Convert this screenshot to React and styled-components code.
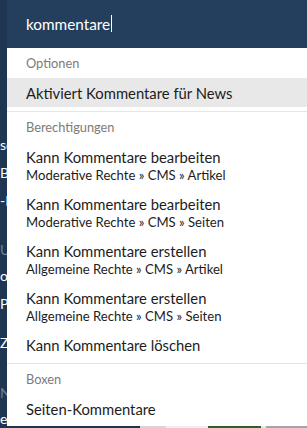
import { createGlobalStyle, styled } from "styled-components"

const GlobalStyle = createGlobalStyle`
  html, body {
    margin: 0;
    height: 100%;
    overflow: hidden;
  }
  body {
    background: #1e3652;
    font-family: Lato, "Open Sans", sans-serif;
  }
  #root {
    height: 100%;
  }
`

const Page = styled.div`
  position: relative;
  display: flex;
  height: 100%;
`

const Sidebar = styled.nav`
  width: 138px;
  flex: 0 0 138px;
  background: #1e3652;
  padding-top: 131px;
  box-sizing: border-box;
`

const NavItem = styled.div`
  height: ${({ $section }) => ($section ? 25 : 28)}px;
  line-height: ${({ $section }) => ($section ? 25 : 28)}px;
  font-size: 14px;
  white-space: nowrap;
  color: ${({ $section }) => ($section ? "#6d8199" : "#ffffff")};
  margin-top: ${({ $gap }) => $gap || 0}px;
`

const Main = styled.main`
  flex: 1;
  display: flex;
  flex-direction: column;
  background: #f4f4f4;
`

const Spacer = styled.div`
  flex: 0 0 426px;
`

const Footer = styled.div`
  display: flex;
  height: 30px;
`

const FooterBlock = styled.div`
  width: ${({ $w }) => $w}px;
  background: ${({ $bg }) => $bg};
`

const Panel = styled.div`
  position: absolute;
  left: 7px;
  top: 0;
  width: 300px;
  height: 426px;
  background: #ffffff;
  display: flex;
  flex-direction: column;
  overflow: hidden;
`

const SearchBar = styled.div`
  height: 48px;
  flex: 0 0 48px;
  background: #243f5d;
  display: flex;
  align-items: center;
  padding-left: 19px;
  padding-bottom: 1px;
  box-sizing: border-box;
`

const Query = styled.span`
  color: #ffffff;
  font-size: 15.3px;
`

const Caret = styled.span`
  display: inline-block;
  width: 1px;
  height: 17px;
  margin-left: 1px;
  background: #ffffff;
`

const Group = styled.div`
  padding-bottom: 4px;
  border-bottom: ${({ $last }) => ($last ? "none" : "1px solid #e4e4e4")};
`

const GroupLabel = styled.div`
  height: 30px;
  line-height: 30px;
  padding-left: 19px;
  font-size: 12.8px;
  color: #7b7b7b;
`

const Item = styled.div`
  padding: 6px 19px 5px;
  background: ${({ $active }) => ($active ? "#e8e8e8" : "transparent")};
  color: #1c1c1c;
`

const Title = styled.div`
  font-size: 14.8px;
  line-height: 18px;
`

const Sub = styled.div`
  font-size: 13.1px;
  line-height: 18px;
`

const groups = [
  {
    label: "Optionen",
    items: [{ title: "Aktiviert Kommentare für News", active: true }],
  },
  {
    label: "Berechtigungen",
    items: [
      { title: "Kann Kommentare bearbeiten", sub: "Moderative Rechte » CMS » Artikel" },
      { title: "Kann Kommentare bearbeiten", sub: "Moderative Rechte » CMS » Seiten" },
      { title: "Kann Kommentare erstellen", sub: "Allgemeine Rechte » CMS » Artikel" },
      { title: "Kann Kommentare erstellen", sub: "Allgemeine Rechte » CMS » Seiten" },
      { title: "Kann Kommentare löschen" },
    ],
  },
  {
    label: "Boxen",
    items: [{ title: "Seiten-Kommentare" }],
  },
]

export default function App() {
  return (
    <>
      <GlobalStyle />
      <Page>
        <Sidebar>
          <NavItem>sessions</NavItem>
          <NavItem>Benutzer</NavItem>
          <NavItem>-Liste</NavItem>
          <NavItem $section $gap={22}>UMFRAGEN</NavItem>
          <NavItem>ocks</NavItem>
          <NavItem>Pinnwand</NavItem>
          <NavItem $gap={11}>Zugriff</NavItem>
          <NavItem $section $gap={23}>NEWS</NavItem>
          <NavItem>elemente</NavItem>
        </Sidebar>
        <Main>
          <Spacer />
          <Footer>
            <FooterBlock $w={2} $bg="#1a2f47" />
            <FooterBlock $w={26} $bg="#d6d6d6" />
            <FooterBlock $w={42} $bg="#eeeeee" />
            <FooterBlock $w={53} $bg="#2d5e34" />
            <FooterBlock $w={5} $bg="#e6e6e6" />
            <FooterBlock $w={41} $bg="#a5a5a5" />
          </Footer>
        </Main>

        <Panel>
          <SearchBar>
            <Query>kommentare</Query>
            <Caret />
          </SearchBar>
          {groups.map((g, gi) => (
            <Group key={g.label} $last={gi === groups.length - 1}>
              <GroupLabel>{g.label}</GroupLabel>
              {g.items.map((it, i) => (
                <Item key={i} $active={it.active}>
                  <Title>{it.title}</Title>
                  {it.sub && <Sub>{it.sub}</Sub>}
                </Item>
              ))}
            </Group>
          ))}
        </Panel>
      </Page>
    </>
  )
}
